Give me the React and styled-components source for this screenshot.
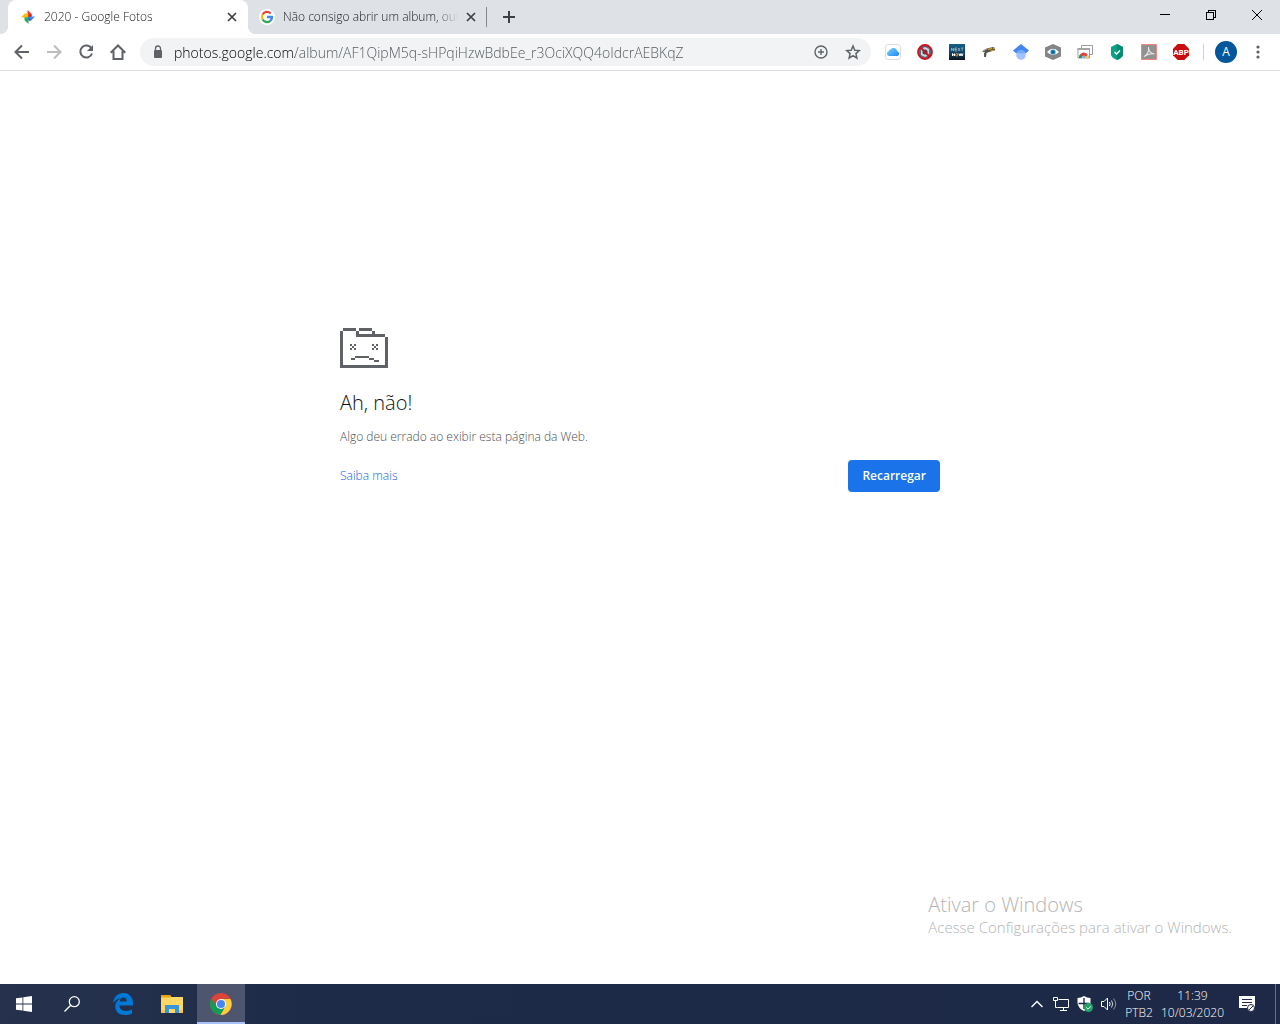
import React from "react";
import styled, { createGlobalStyle } from "styled-components";

const GlobalStyle = createGlobalStyle`
  *, *::before, *::after { box-sizing: border-box; }
  body { margin: 0; background: #fff; font-family: "Open Sans", "Noto Sans", sans-serif; font-size: 12px; line-height: 16px; font-weight: 350; }
  button, input { font: inherit; margin: 0; }
  svg { display: block; flex: none; }
`;

const Screen = styled.div`
  min-height: 100vh;
  display: flex;
  flex-direction: column;
`;

const PlainButton = styled.button`
  display: flex;
  align-items: center;
  justify-content: center;
  flex: none;
  border: 0;
  padding: 0;
  background: transparent;
  color: inherit;
`;

/* Tab strip */
const TabStrip = styled.header`
  display: flex;
  height: 34px;
  padding-left: 8px;
  background: #dee1e6;
`;

const Tabs = styled.nav`
  display: flex;
  min-width: 0;
`;

const Tab = styled.div`
  position: relative;
  display: flex;
  align-items: center;
  width: ${(p) => (p.$active ? 240 : 239)}px;
  padding: 0 8px 0 ${(p) => (p.$active ? 12 : 11)}px;
  color: #202124;
  background: ${(p) => (p.$active ? "#fff" : "transparent")};
  border-radius: 8px 8px 0 0;

  &::before, &::after {
    content: "";
    display: ${(p) => (p.$active ? "block" : "none")};
    position: absolute;
    bottom: 0;
    width: 8px;
    height: 8px;
  }
  &::before { left: -8px; background: radial-gradient(circle at 0 0, transparent 8px, #fff 8px); }
  &::after { right: -8px; background: radial-gradient(circle at 100% 0, transparent 8px, #fff 8px); }
`;

const TabTitle = styled.span`
  flex: 1;
  min-width: 0;
  margin: 0 4px 0 8px;
  overflow: hidden;
  white-space: nowrap;
  mask-image: linear-gradient(90deg, #000 calc(100% - 24px), transparent);
`;

const CloseTab = styled(PlainButton)`
  width: 16px;
  height: 16px;
  color: #3c4043;
`;

const TabDivider = styled.span`
  align-self: center;
  width: 1px;
  height: 20px;
  margin-left: -1px;
  background: #85888c;
`;

const NewTab = styled(PlainButton)`
  width: 28px;
  margin-left: 8px;
  color: #3c4043;
`;

const WindowButtons = styled.div`
  display: flex;
  margin-left: auto;
`;

const WindowButton = styled(PlainButton)`
  width: 46px;
  height: 29px;
  color: #000;
`;

/* Toolbar */
const Toolbar = styled.div`
  display: flex;
  align-items: center;
  height: 37px;
  padding: 0 6px;
  border-bottom: 1px solid #dadce0;
  background: #fff;
`;

const ToolButton = styled(PlainButton)`
  width: 32px;
  height: 28px;
  color: ${(p) => (p.$muted ? "#babcbe" : "#5f6368")};
`;

const AddressBar = styled.form`
  display: flex;
  align-items: center;
  flex: 1;
  min-width: 0;
  height: 28px;
  margin: 0 6px;
  padding-left: 10px;
  padding-right: 2px;
  border-radius: 14px;
  background: #f1f3f4;
  color: #5f6368;
`;

const AddressInput = styled.input`
  flex: 1;
  min-width: 0;
  height: 24px;
  margin-left: 8px;
  padding: 0;
  border: 0;
  outline: 0;
  font-size: 14px;
  background: linear-gradient(90deg, #000 ${(p) => p.$hostWidth}px, #505458 ${(p) => p.$hostWidth}px);
  background-clip: text;
  color: transparent;
`;

const ToolDivider = styled.span`
  width: 1px;
  height: 16px;
  margin: 0 6px;
  background: #cfd1d4;
`;

const Avatar = styled.span`
  display: grid;
  place-items: center;
  width: 22px;
  height: 22px;
  border-radius: 50%;
  background: #01579b;
  color: #fff;
  font-weight: 400;
`;

/* Error page */
const Page = styled.main`
  position: relative;
  flex: 1;
  padding: 257px 24px 24px;
  background: #fff;
`;

const ErrorBox = styled.section`
  max-width: 600px;
  margin: 0 auto;
  color: #4c4f53;
`;

const ErrorTitle = styled.h1`
  margin: 21px 0 11px;
  font-size: 20px;
  line-height: 28px;
  font-weight: 350;
  color: #111214;
`;

const ErrorText = styled.p`
  margin: 0;
  line-height: 18px;
`;

const Actions = styled.div`
  display: flex;
  align-items: center;
  justify-content: space-between;
  margin-top: 14px;
`;

const HelpLink = styled.a`
  color: #1163dc;
  text-decoration: none;
`;

const ReloadButton = styled.button`
  height: 32px;
  padding: 0 14px;
  border: 0;
  border-radius: 4px;
  background: #1a73e8;
  color: #fff;
  font-weight: 600;
`;

const Watermark = styled.aside`
  position: absolute;
  right: 48px;
  bottom: 46px;
  color: #b4b4b4;
  font-size: 15px;
  line-height: 22px;
  font-weight: 300;
`;

const WatermarkTitle = styled.div`
  font-size: 20px;
  line-height: 22px;
`;

/* Taskbar */
const Taskbar = styled.footer`
  display: flex;
  height: 40px;
  background: linear-gradient(90deg, #26324d, #1e2b48 25%, #1d2946);
  color: #fff;
`;

const TaskButton = styled(PlainButton)`
  width: 48px;
  height: 40px;
  border-bottom: 2px solid ${(p) => (p.$active ? "#a6c1f7" : "transparent")};
  border-top: 2px solid transparent;
  background: ${(p) => (p.$active ? "#4d566e" : "transparent")};
`;

const Apps = styled.div`
  display: flex;
  gap: 1px;
  margin-left: 3px;
`;

const Tray = styled.div`
  display: flex;
  align-items: stretch;
  margin-left: auto;
`;

const TrayButton = styled(PlainButton)`
  width: ${(p) => p.$width || 24}px;
`;

const TrayText = styled(PlainButton)`
  flex-direction: column;
  width: ${(p) => p.$width}px;
  line-height: 17px;
  padding-bottom: 1px;
  white-space: nowrap;
`;

const TraySpace = styled.span`
  width: 9px;
`;

const ShowDesktop = styled(PlainButton)`
  width: 5px;
  border-left: 1px solid #66708a;
`;

const Cross = () => (
  <svg width="10" height="10" viewBox="0 0 10 10" stroke="currentColor" strokeWidth="1.7"><path d="M1 1l8 8M9 1L1 9" /></svg>
);

const PhotosIcon = () => (
  <svg width="16" height="16" viewBox="0 0 16 16">
    <path d="M7.500 1L11.500 4.800V8H7.500z" fill="#ea4335" />
    <path d="M1 8.500L4.800 4.500H7.800V8.500z" fill="#fbbc04" />
    <path d="M15 7.500L11.200 11.500H8.200V7.500z" fill="#4285f4" />
    <path d="M8.500 15L4.500 11.200V8.200H8.500z" fill="#34a853" />
    <path d="M11.500 4.800V7.500H8z" fill="#b3261e" />
    <path d="M11.200 11.500H8.500V8z" fill="#2a56c6" />
  </svg>
);

const GoogleIcon = () => (
  <svg width="16" height="16" viewBox="0 0 16 16">
    <circle cx="8" cy="8" r="8" fill="#fff" />
    <g fill="none" strokeWidth="2.3">
      <path d="M3.6 5.5A5 5 0 0 1 11.6 4.500" stroke="#ea4335" />
      <path d="M3.6 10.500A5 5 0 0 1 3.6 5.500" stroke="#fbbc05" />
      <path d="M11.3 11.800A5 5 0 0 1 3.6 10.500" stroke="#34a853" />
      <path d="M8 8h5A5 5 0 0 1 11.3 11.800" stroke="#4285f4" />
    </g>
  </svg>
);

const SadFolder = () => (
  <svg width="48" height="40" viewBox="0 0 48 40" shapeRendering="crispEdges" fill="#5f6368">
    <path d="M3 0h13v3H3zM19 0h13v3H19zM16 3h3v3h-3zM32 3h3v3h-3zM16 6h29v3H16zM45 9h3v31h-3zM0 3h3v37H0zM0 37h48v3H0z" />
    {[10, 32].map((x) => (
      <path key={x} d={`M${x} 16h2v2h-2zM${x + 4} 16h2v2h-2zM${x + 2} 18h2v2h-2zM${x} 20h2v2h-2zM${x + 4} 20h2v2h-2z`} />
    ))}
    <path d="M11 30h4v2h-4zM15 28h14v2H15zM29 30h5v2h-5zM34 32h5v2h-5z" />
  </svg>
);

const stroke = { fill: "none", stroke: "currentColor" };

const extensions = [
  ["iCloud", <svg width="16" height="16" viewBox="0 0 16 16">
    <defs><linearGradient id="cloud" x2="1" y2="1"><stop stopColor="#78d4fb" /><stop offset="1" stopColor="#1f86f1" /></linearGradient></defs>
    <rect x=".5" y=".5" width="15" height="15" rx="2.500" fill="#fff" stroke="#dedede" />
    <path d="M4 12A2.500 2.500 0 0 1 3.600 7.200a2.200 2.200 0 0 1 2-1.800A3.700 3.700 0 0 1 12.200 7.300 2.400 2.400 0 0 1 12.500 12z" fill="url(#cloud)" />
  </svg>],
  ["Bloqueador", <svg width="16" height="16" viewBox="0 0 16 16">
    <circle cx="8" cy="8" r="7" fill="#5b6b7b" /><path d="M4 5l4-2 4 2v6l-4 2-4-2z" fill="#c9d6e0" /><circle cx="8" cy="8" r="2.500" fill="#345" />
    <circle cx="8" cy="8" r="7" fill="none" stroke="#c9151e" strokeWidth="1.800" /><path d="M3 3l10 10" stroke="#c9151e" strokeWidth="2" />
  </svg>],
  ["NEXT Now", <svg width="16" height="16" viewBox="0 0 16 16">
    <defs><linearGradient id="next" x2="0" y2="1"><stop stopColor="#17608a" /><stop offset=".6" stopColor="#0f3f5e" /><stop offset="1" stopColor="#10141f" /></linearGradient></defs>
    <path fill="url(#next)" d="M0 0h16v16H0z" />
    <path d="M2.500 7V4l2 3V4M8 4H6v3h2M6 5.500h2M9 4l2 3M11 4L9 7M12 4h2.500M13.200 4v3" fill="none" stroke="#a9c5d2" strokeWidth=".7" />
    <path d="M3.500 12V9.500l2 2.500V9.500M10 9.500l1 2.500 1-2.500 1 2.500 1-2.500" fill="none" stroke="#fff" /><circle cx="7.800" cy="10.800" r="1.200" fill="none" stroke="#e9a23b" />
  </svg>],
  ["Pistola", <svg width="16" height="16" viewBox="0 0 16 16">
    <path d="M1.500 7L5 4.800 12 3l2 1v2.300L8 8 5.500 9 5 13H3.200L3 9.500 4 7.800 2 8.200z" fill="#50504a" /><path d="M7 5.500l4-1.200M9.500 7.200l3-1M12 4.200l2 .5" stroke="#d9a52c" strokeWidth="1.300" /><path d="M2 7l4-2" stroke="#a9a9a0" />
  </svg>],
  ["Google Acadêmico", <svg width="16" height="16" viewBox="0 0 16 16">
    <path d="M8 0l8 6.500-3 2.700H3L0 6.500z" fill="#4285f4" /><circle cx="8" cy="11" r="4.800" fill="#a0c3ff" /><path d="M3.500 9.300a5 5 0 0 1 9 0z" fill="#76a7fa" />
  </svg>],
  ["Visualizador", <svg width="16" height="16" viewBox="0 0 16 16">
    <path d="M8 0l8 3.500v9L8 16 0 12.500v-9z" fill="#858585" /><path d="M2 8q6-6.500 12 0-6 6-12 0z" fill="#fff" /><circle cx="8" cy="8" r="2.600" fill="#2387ba" /><circle cx="8" cy="8" r="1" fill="#0b4f7a" />
  </svg>],
  ["Loja virtual", <svg width="16" height="16" viewBox="0 0 16 16">
    <path d="M4.500 4V1.500h11v9h-3" fill="#fff" stroke="#9d9d9d" /><path d="M1 4.500h11.500v9.500H1z" fill="#fff" stroke="#9d9d9d" /><path d="M.5 4h12.500v2H.5z" fill="#a4a4a4" />
    <path d="M2 14a4.800 5.500 0 0 1 9.600 0z" fill="#db4437" /><path d="M2 14a4.800 5.500 0 0 1 1-3.500l3 3.500z" fill="#0f9d58" /><path d="M11.600 14a4.800 5.500 0 0 0-1-3.500L8 14z" fill="#ffcd40" /><path d="M5 14a2 2 0 0 1 4 0z" fill="#4285f4" stroke="#fff" strokeWidth=".5" />
  </svg>],
  ["Proteção", <svg width="16" height="16" viewBox="0 0 16 16">
    <path d="M8 0l6 3v8Q13 14 8 16 3 14 2 11V3z" fill="#0aa284" /><path d="M8 0l6 3v8Q13 14 8 16z" fill="#078c73" /><path d="M5.500 8l2 2 3.500-3.500" fill="none" stroke="#fff" strokeWidth="1.400" />
  </svg>],
  ["Adobe Acrobat", <svg width="16" height="16" viewBox="0 0 16 16">
    <path d="M.5.5h15v15H.5z" fill="#919191" stroke="#ed8a7d" /><path d="M3 12.500c4-2 5-6 4.500-9.500 0 4 2 6.500 6 7-4-.8-7 0-10.500 2.500z" fill="none" stroke="#e9e9e9" strokeWidth="1.100" />
  </svg>],
  ["Adblock Plus", <svg width="16" height="16" viewBox="0 0 16 16">
    <path d="M4.700 0h6.600L16 4.700v6.600L11.300 16H4.700L0 11.300V4.700z" fill="#c70d0d" />
    <text x="8" y="11" textAnchor="middle" fontFamily="Roboto, sans-serif" fontWeight="700" fontSize="8" fill="#fff">ABP</text>
  </svg>],
];

const ChromeIcon = () => (
  <svg width="22" height="22" viewBox="0 0 22 22">
    <circle cx="11" cy="11" r="11" fill="#db4437" />
    <path d="M1.500 5.500A11 11 0 0 0 10.500 22L15.300 13.500 11 11 6.700 13.500z" fill="#0f9d58" />
    <path d="M20.500 6A11 11 0 0 1 10.500 22L15.300 13.500 11 6z" fill="#ffcd40" />
    <circle cx="11" cy="11" r="5" fill="#fff" /><circle cx="11" cy="11" r="4" fill="#4285f4" />
  </svg>
);

export default function App() {
  return (
    <Screen>
      <GlobalStyle />
      <TabStrip>
        <Tabs aria-label="Guias">
          <Tab $active>
            <PhotosIcon />
            <TabTitle>2020 - Google Fotos</TabTitle>
            <CloseTab aria-label="Fechar guia"><Cross /></CloseTab>
          </Tab>
          <Tab>
            <GoogleIcon />
            <TabTitle>Não consigo abrir um album, out</TabTitle>
            <CloseTab aria-label="Fechar guia"><Cross /></CloseTab>
          </Tab>
        </Tabs>
        <TabDivider />
        <NewTab aria-label="Nova guia">
          <svg width="12" height="12" viewBox="0 0 12 12" stroke="currentColor" strokeWidth="2"><path d="M6 0v12M0 6h12" /></svg>
        </NewTab>
        <WindowButtons>
          <WindowButton aria-label="Minimizar"><svg width="10" height="10" shapeRendering="crispEdges"><path d="M0 4h10v1H0z" /></svg></WindowButton>
          <WindowButton aria-label="Restaurar"><svg width="10" height="10" viewBox="0 0 10 10" fill="none" stroke="#000" shapeRendering="crispEdges"><path d="M.5 2.500h7v7h-7zM2.500 2.500v-2h7v7h-2" /></svg></WindowButton>
          <WindowButton aria-label="Fechar"><svg width="10" height="10" viewBox="0 0 10 10" stroke="#000"><path d="M0 0l10 10M10 0L0 10" /></svg></WindowButton>
        </WindowButtons>
      </TabStrip>

      <Toolbar>
        <ToolButton aria-label="Voltar"><svg width="16" height="16" viewBox="0 0 16 16" {...stroke} strokeWidth="2"><path d="M15 8H2M8 1.500L1.500 8 8 14.500" /></svg></ToolButton>
        <ToolButton $muted aria-label="Avançar"><svg width="16" height="16" viewBox="0 0 16 16" {...stroke} strokeWidth="2"><path d="M1 8h13M8 1.500L14.500 8 8 14.500" /></svg></ToolButton>
        <ToolButton aria-label="Atualizar"><svg width="16" height="16" viewBox="0 0 16 16" {...stroke} strokeWidth="2"><path d="M13.500 4.500A6 6 0 1 0 14 9.500" /><path d="M15 1v6H9z" fill="currentColor" stroke="none" /></svg></ToolButton>
        <ToolButton aria-label="Página inicial"><svg width="16" height="16" viewBox="0 0 16 16" {...stroke} strokeWidth="2"><path d="M.7 8.800L8 1.500l7.300 7.300M3.500 7v8h9V7" /></svg></ToolButton>
        <AddressBar onSubmit={(e) => e.preventDefault()}>
          <svg width="16" height="16" viewBox="0 0 16 16"><path d="M5 6h6q1 0 1 1v6q0 1-1 1H5q-1 0-1-1V7q0-1 1-1z" fill="currentColor" /><path d="M5.500 6.500V4.500a2.500 2.500 0 0 1 5 0v2" {...stroke} strokeWidth="1.300" /></svg>
          <AddressInput
            aria-label="Barra de endereço"
            $hostWidth={121}
            defaultValue="photos.google.com/album/AF1QipM5q-sHPqiHzwBdbEe_r3OciXQQ4oIdcrAEBKqZ"
          />
          <ToolButton type="button" aria-label="Zoom"><svg width="14" height="14" viewBox="0 0 14 14" {...stroke} strokeWidth="1.400"><circle cx="7" cy="7" r="6" /><path d="M7 4v6M4 7h6" /></svg></ToolButton>
          <ToolButton type="button" aria-label="Adicionar aos favoritos"><svg width="16" height="16" viewBox="0 0 16 16" {...stroke} strokeWidth="1.500"><path d="M8 2l1.800 4.200 4.500.4-3.400 3 1 4.500L8 11.700l-3.900 2.400 1-4.500-3.400-3 4.500-.4z" /></svg></ToolButton>
        </AddressBar>
        {extensions.map(([name, icon]) => (
          <ToolButton key={name} aria-label={name}>{icon}</ToolButton>
        ))}
        <ToolDivider />
        <ToolButton aria-label="Perfil"><Avatar>A</Avatar></ToolButton>
        <ToolButton aria-label="Menu"><svg width="4" height="16" viewBox="0 0 4 16" fill="currentColor"><circle cx="2" cy="3" r="1.600" /><circle cx="2" cy="8" r="1.600" /><circle cx="2" cy="13" r="1.600" /></svg></ToolButton>
      </Toolbar>

      <Page>
        <ErrorBox>
          <SadFolder />
          <ErrorTitle>Ah, não!</ErrorTitle>
          <ErrorText>Algo deu errado ao exibir esta página da Web.</ErrorText>
          <Actions>
            <HelpLink href="#">Saiba mais</HelpLink>
            <ReloadButton>Recarregar</ReloadButton>
          </Actions>
        </ErrorBox>
        <Watermark>
          <WatermarkTitle>Ativar o Windows</WatermarkTitle>
          Acesse Configurações para ativar o Windows.
        </Watermark>
      </Page>

      <Taskbar>
        <TaskButton aria-label="Iniciar"><svg width="16" height="16" viewBox="0 0 16 16" fill="#fff"><path d="M0 2.300L6.500 1.400v6.100H0zM7.300 1.200L16 0v7.500H7.300zM0 8.400h6.500v6.200L0 13.700zM7.300 8.400H16V16l-8.700-1.200z" /></svg></TaskButton>
        <TaskButton aria-label="Pesquisar"><svg width="16" height="16" viewBox="0 0 16 16" {...stroke} strokeWidth="1.300"><circle cx="10.300" cy="5.700" r="5" /><path d="M6.700 9.300L.5 15.500" /></svg></TaskButton>
        <Apps>
          <TaskButton aria-label="Microsoft Edge"><svg width="20" height="22" viewBox="0 0 20 22"><path d="M0 10C1 3.500 5 0 10.500 0 16.500 0 20 4.500 20 10v2.500H6.500c0 4 3 5.500 6.500 5.500 2.500 0 4.500-.7 6-1.700v4.200C17 21.500 14.500 22 12 22 6 22 2.200 18.500 2.200 13.500c0-3.500 2-6.500 5.300-8C4.500 5.500 2 7.500 0 10zm6.800-1.500h7C13.800 6 12.500 4.500 10.500 4.500 8.500 4.500 7 6 6.800 8.500z" fill="#0078d7" /></svg></TaskButton>
          <TaskButton aria-label="Explorador de Arquivos"><svg width="22" height="18" viewBox="0 0 22 18"><path d="M0 0h9l1.500 2H22v16H0z" fill="#ffd767" /><path d="M0 0h9l1 2.500H0z" fill="#e6a70b" /><path d="M4 18v-8h14v8h-4v-4H8v4z" fill="#3996d7" /><path d="M0 15h4v3H0zM18 15h4v3h-4z" fill="#f5c64d" /></svg></TaskButton>
          <TaskButton $active aria-label="Google Chrome"><ChromeIcon /></TaskButton>
        </Apps>
        <Tray>
          <TrayButton aria-label="Mostrar ícones ocultos"><svg width="12" height="8" viewBox="0 0 12 8" {...stroke} strokeWidth="1.400"><path d="M.5 7L6 1.500 11.500 7" /></svg></TrayButton>
          <TrayButton aria-label="Rede"><svg width="16" height="14" viewBox="0 0 16 14" {...stroke}><path d="M5.500 2.500h10v8h-11M10.500 10.500v3M7 13.500h7M.5.500h4v3h-4zM2.500 3.500v7h2" /></svg></TrayButton>
          <TrayButton aria-label="Segurança"><svg width="16" height="16" viewBox="0 0 16 16"><path d="M7 0Q10 2 13.500 2V7Q13 12 7 15 1 12 .5 7V2Q4 2 7 0z" fill="#fff" /><path d="M7 2v11M1.500 7.500h11" stroke="#1e2b48" strokeWidth="1.400" /><circle cx="11.500" cy="11.500" r="4.500" fill="#21a366" /><path d="M9.300 11.500l1.700 1.700 3-3" fill="none" stroke="#fff" /></svg></TrayButton>
          <TrayButton aria-label="Volume"><svg width="16" height="14" viewBox="0 0 16 14" {...stroke}><path d="M.5 4.500h2.500L6.500 1v12L3 9.500H.5zM8.500 5q1.300 2 0 4" /><path d="M10.500 3.500q2.500 3.500 0 7" opacity=".8" /><path d="M12.500 1.500q4.500 5.500 0 11" opacity=".5" /></svg></TrayButton>
          <TrayText $width={36}><span>POR</span><span>PTB2</span></TrayText>
          <TrayText $width={71}><span>11:39</span><span>10/03/2020</span></TrayText>
          <TrayButton $width={38} aria-label="Notificações"><svg width="16" height="16" viewBox="0 0 16 16"><path d="M0 0h16v12h-4v4l-4-4H0z" fill="#fff" /><path d="M3 3.500h10M3 6.500h10M3 9.500h5" stroke="#1e2b48" /><circle cx="12" cy="12" r="3.500" fill="#fff" stroke="#1e2b48" /><path d="M10 14l4-4" stroke="#1e2b48" /></svg></TrayButton>
          <TraySpace />
          <ShowDesktop aria-label="Mostrar área de trabalho" />
        </Tray>
      </Taskbar>
    </Screen>
  );
}
